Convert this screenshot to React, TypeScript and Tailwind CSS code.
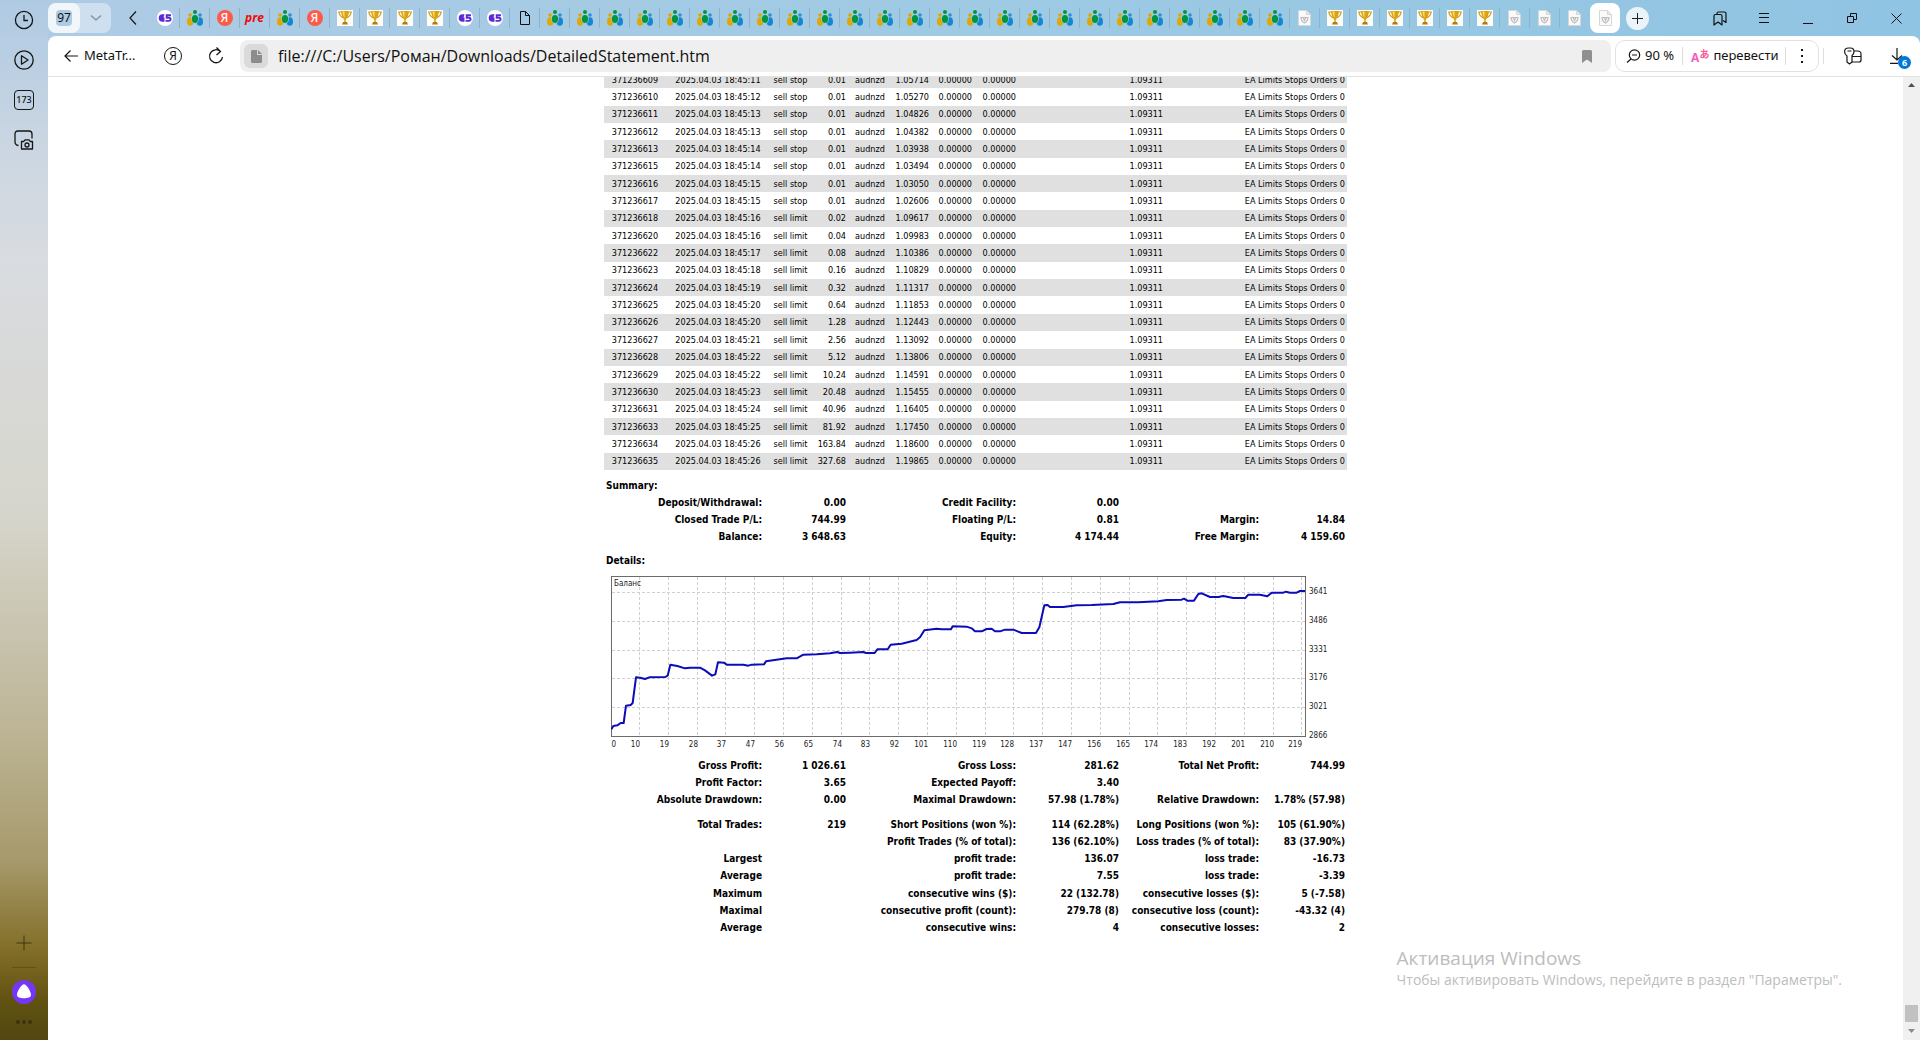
import React from 'react';

type TabKind = 'gs' | 'people' | 'yandex' | 'pre' | 'trophy' | 'file' | 'ghost';

const repeat = (kind: TabKind, count: number): TabKind[] => Array.from({ length: count }, () => kind);

const tabs: TabKind[] = [
  'gs',
  'people',
  'yandex',
  'pre',
  'people',
  'yandex',
  ...repeat('trophy', 4),
  ...repeat('gs', 2),
  'file',
  ...repeat('people', 25),
  'ghost',
  ...repeat('trophy', 6),
  ...repeat('ghost', 4),
];

// ticket, time, type, size, price
const orders = [
  ['371236609', '18:45:11', 'sell stop', '0.01', '1.05714'],
  ['371236610', '18:45:12', 'sell stop', '0.01', '1.05270'],
  ['371236611', '18:45:13', 'sell stop', '0.01', '1.04826'],
  ['371236612', '18:45:13', 'sell stop', '0.01', '1.04382'],
  ['371236613', '18:45:14', 'sell stop', '0.01', '1.03938'],
  ['371236615', '18:45:14', 'sell stop', '0.01', '1.03494'],
  ['371236616', '18:45:15', 'sell stop', '0.01', '1.03050'],
  ['371236617', '18:45:15', 'sell stop', '0.01', '1.02606'],
  ['371236618', '18:45:16', 'sell limit', '0.02', '1.09617'],
  ['371236620', '18:45:16', 'sell limit', '0.04', '1.09983'],
  ['371236622', '18:45:17', 'sell limit', '0.08', '1.10386'],
  ['371236623', '18:45:18', 'sell limit', '0.16', '1.10829'],
  ['371236624', '18:45:19', 'sell limit', '0.32', '1.11317'],
  ['371236625', '18:45:20', 'sell limit', '0.64', '1.11853'],
  ['371236626', '18:45:20', 'sell limit', '1.28', '1.12443'],
  ['371236627', '18:45:21', 'sell limit', '2.56', '1.13092'],
  ['371236628', '18:45:22', 'sell limit', '5.12', '1.13806'],
  ['371236629', '18:45:22', 'sell limit', '10.24', '1.14591'],
  ['371236630', '18:45:23', 'sell limit', '20.48', '1.15455'],
  ['371236631', '18:45:24', 'sell limit', '40.96', '1.16405'],
  ['371236633', '18:45:25', 'sell limit', '81.92', '1.17450'],
  ['371236634', '18:45:26', 'sell limit', '163.84', '1.18600'],
  ['371236635', '18:45:26', 'sell limit', '327.68', '1.19865'],
];

const summary = [
  ['Deposit/Withdrawal:', '0.00', 'Credit Facility:', '0.00', '', ''],
  ['Closed Trade P/L:', '744.99', 'Floating P/L:', '0.81', 'Margin:', '14.84'],
  ['Balance:', '3 648.63', 'Equity:', '4 174.44', 'Free Margin:', '4 159.60'],
];

const profit = [
  ['Gross Profit:', '1 026.61', 'Gross Loss:', '281.62', 'Total Net Profit:', '744.99'],
  ['Profit Factor:', '3.65', 'Expected Payoff:', '3.40', '', ''],
  ['Absolute Drawdown:', '0.00', 'Maximal Drawdown:', '57.98 (1.78%)', 'Relative Drawdown:', '1.78% (57.98)'],
];

const trades = [
  ['Total Trades:', '219', 'Short Positions (won %):', '114 (62.28%)', 'Long Positions (won %):', '105 (61.90%)'],
  ['', '', 'Profit Trades (% of total):', '136 (62.10%)', 'Loss trades (% of total):', '83 (37.90%)'],
  ['Largest', '', 'profit trade:', '136.07', 'loss trade:', '-16.73'],
  ['Average', '', 'profit trade:', '7.55', 'loss trade:', '-3.39'],
  ['Maximum', '', 'consecutive wins ($):', '22 (132.78)', 'consecutive losses ($):', '5 (-7.58)'],
  ['Maximal', '', 'consecutive profit (count):', '279.78 (8)', 'consecutive loss (count):', '-43.32 (4)'],
  ['Average', '', 'consecutive wins:', '4', 'consecutive losses:', '2'],
];

const xLabels = [0, 10, 19, 28, 37, 47, 56, 65, 74, 83, 92, 101, 110, 119, 128, 137, 147, 156, 165, 174, 183, 192, 201, 210, 219];
const yLabels = [3641, 3486, 3331, 3176, 3021, 2866];

const balance =
  '1,460 7,450 19,448 29,441 38,441 45,389 59,387 65,381 75,304 87,305 102,309 115,304 163,303 170,299 178,266 199,270 222,277 237,275 267,275 282,283 303,299 313,295 321,259 339,260 347,266 397,266 412,269 422,266 459,265 465,256 527,247 557,247 577,236 617,235 657,232 679,228 687,231 717,230 757,228 765,231 791,231 799,220 830,220 839,206 872,203 917,192 927,184 940,163 977,158 992,160 1020,160 1025,151 1067,152 1082,157 1092,166 1112,166 1127,159 1142,158 1152,166 1167,166 1182,161 1207,161 1232,171 1275,171 1285,154 1300,88 1310,87 1317,93 1357,93 1397,88 1442,87 1507,84 1527,79 1582,79 1642,76 1667,72 1712,71 1719,68 1729,74 1749,74 1762,54 1772,52 1797,63 1822,63 1837,60 1867,66 1903,66 1912,56 1947,56 1969,61 1982,50 2017,50 2025,47 2037,50 2057,50 2067,45 2082,45';

const Favicon: React.FC<{ kind: TabKind }> = ({ kind }) => {
  switch (kind) {
    case 'gs':
      return (
        <svg width="16" height="16" viewBox="0 0 16 16">
          <circle cx="8" cy="8" r="8" fill="#fff" />
          <path d="M7.500 4.200H5.500a3.800 3.800 0 0 0 0 7.600h2V7.500H4.500v1.800H6" fill="#5b2bd9" />
          <path d="M14 5.200H9.700v2.500H12a1.600 1.600 0 0 1 0 3.200H8.500" fill="none" stroke="#5b2bd9" strokeWidth="1.900" />
        </svg>
      );
    case 'people':
      return (
        <svg width="16" height="16" viewBox="0 0 16 16">
          <circle cx="3" cy="5" r="1.800" fill="#d9a70b" />
          <ellipse cx="3.200" cy="11.500" rx="3.200" ry="4.300" fill="#e0a800" />
          <circle cx="13" cy="5" r="1.800" fill="#2f8fd0" />
          <ellipse cx="12.800" cy="11.500" rx="3.200" ry="4.300" fill="#1387d2" />
          <ellipse cx="8" cy="9.200" rx="3.700" ry="4.400" fill="#a5c9e3" />
          <ellipse cx="8" cy="9" rx="3.100" ry="4" fill="#009640" />
          <circle cx="8" cy="2" r="2" fill="#009640" />
        </svg>
      );
    case 'yandex':
      return (
        <span className="flex size-4 items-center justify-center rounded-full bg-[#fc5b48] font-['Noto_Sans',sans-serif] text-xs font-medium text-white">Я</span>
      );
    case 'pre':
      return <span className="font-['Open_Sans',sans-serif] text-xs font-bold text-[#f00808] italic">pre</span>;
    case 'trophy':
      return (
        <svg width="16" height="16" viewBox="0 0 16 16">
          <path d="M0 0h16v16H0z" fill="#fffdf6" />
          <path d="M4.500 2H1.800Q2.300 6 6.500 8M11.500 2h2.700Q13.700 6 9.500 8" fill="none" stroke="#c99a1c" strokeWidth="1.200" />
          <path d="M4 1h8Q11.500 7 8.800 9.500v3H7.200v-3Q4.500 7 4 1z" fill="#d9a314" />
          <path d="M5.500 1.500h2v6.500Q5.800 5.500 5.500 1.500z" fill="#fbe06a" />
          <path d="M6 12h4l1 2.500H5z" fill="#b57a14" />
        </svg>
      );
    case 'file':
      return (
        <svg width="10" height="14" viewBox="0 0 10 14" fill="none" stroke="#111">
          <path d="M.5.5h5l4 4v9h-9zM5.500.5v4h4" />
        </svg>
      );
    default:
      return (
        <svg width="13" height="16" viewBox="0 0 13 16">
          <path d="M.5.5h8l4 4v11H.5z" fill="#fafafa" stroke="#d6d6d6" />
          <path d="M8.500.5v4h4" fill="#e5e5e5" stroke="#d6d6d6" />
          <path d="M3 7.500h7Q10 11 6.500 13 3 11 3 7.500zM5 7.500l1.500 3 1.500-3" fill="none" stroke="#bcbcbc" strokeWidth="1.200" />
        </svg>
      );
  }
};

const Sidebar = () => (
  <aside className="flex w-12 shrink-0 flex-col items-center">
    <button aria-label="History" className="flex h-10 w-12 items-center justify-center">
      <svg width="20" height="20" viewBox="0 0 20 20" fill="none" stroke="#161616" strokeWidth="1.300">
        <circle cx="10" cy="10" r="8.600" />
        <path d="M10 5v5.500h4" />
      </svg>
    </button>
    <button aria-label="Video" className="flex h-10 w-12 items-center justify-center">
      <svg width="20" height="20" viewBox="0 0 20 20" fill="none" stroke="#161616" strokeWidth="1.300" strokeLinejoin="round">
        <circle cx="10" cy="10" r="9.200" />
        <path d="M7.500 5.800v8.400l6.500-4.200z" />
      </svg>
    </button>
    <button aria-label="Tab count" className="flex h-10 w-12 items-center justify-center">
      <span className="flex size-5 items-center justify-center rounded border border-[#161616] text-[9px] font-medium">173</span>
    </button>
    <button aria-label="Screenshot" className="flex h-10 w-12 items-center justify-center">
      <svg width="20" height="20" viewBox="0 0 20 20" fill="none" stroke="#161616" strokeWidth="1.300">
        <path d="M4.500 15.500Q1 15 1 12V4Q1 1 4 1h11q3 0 3 3v4.500" />
        <path d="M7.500 11.500h2.300l1.200-1.700h4l1.200 1.700h2.300v7.500h-11z" strokeLinejoin="round" />
        <circle cx="13" cy="15" r="2" />
      </svg>
    </button>
    <div className="mt-auto flex flex-col items-center">
      <button aria-label="Add" className="flex h-8 items-center text-[#3c340c]">
        <svg width="16" height="16" viewBox="0 0 16 16" stroke="currentColor">
          <path d="M8 .5v15M.5 8h15" />
        </svg>
      </button>
      <div className="mt-2 h-px w-6 bg-[#5f5216]" />
      <button aria-label="Assistant" className="mt-3 size-6">
        <svg width="24" height="24" viewBox="0 0 24 24">
          <circle cx="12" cy="12" r="12" fill="#7437f7" />
          <path d="M12 4.300c2.600 0 7 7.200 7 10.400 0 2.600-3 3.500-7 3.500s-7-.9-7-3.500c0-3.200 4.400-10.400 7-10.400z" fill="#fff" />
        </svg>
      </button>
      <button aria-label="More" className="flex h-9 items-center gap-0.5">
        <span className="size-1 rounded-full bg-[#3a330c]" />
        <span className="size-1 rounded-full bg-[#3a330c]" />
        <span className="size-1 rounded-full bg-[#3a330c]" />
      </button>
    </div>
  </aside>
);

const TabStrip = () => (
  <header className="flex h-9 shrink-0 items-center">
    <div className="flex h-[30px] w-[63px] items-center rounded-lg bg-white/40">
      <button className="flex h-full w-8 items-center justify-center rounded-lg bg-white/70">
        <span className="flex size-4 items-center justify-center rounded bg-[#adcbe4] text-xs">97</span>
      </button>
      <button aria-label="Tab list" className="flex flex-1 justify-center">
        <svg width="12" height="6" viewBox="0 0 12 6" fill="none" stroke="#7b8da0" strokeWidth="1.300">
          <path d="M1 .5l5 4.500 5-4.500" />
        </svg>
      </button>
    </div>
    <button aria-label="Scroll tabs" className="flex w-[39px] justify-center pl-1">
      <svg width="8" height="14" viewBox="0 0 8 14" fill="none" stroke="#161616" strokeWidth="1.200">
        <path d="M7 .5L1 7l6 6.500" />
      </svg>
    </button>
    <nav className="flex items-center">
      {tabs.map((kind, i) => {
        const active = i === tabs.length - 1;
        const line = i < tabs.length - 2;
        return (
          <button key={i} aria-label={`Tab ${i + 1}`} className={active ? 'flex h-[30px] w-[30px] items-center justify-center rounded-lg bg-white' : 'flex h-[30px] w-[30px] items-center'}>
            {active ? (
              <Favicon kind={kind} />
            ) : (
              <>
                <span className="flex flex-1 justify-center">
                  <Favicon kind={kind} />
                </span>
                <span className={line ? 'h-5 w-px bg-[#8fb2cb]' : 'h-5 w-px'} />
              </>
            )}
          </button>
        );
      })}
    </nav>
    <button aria-label="New tab" className="ml-1.5 flex size-[23px] items-center justify-center rounded-full bg-white/80">
      <svg width="11" height="11" viewBox="0 0 11 11" stroke="#222">
        <path d="M5.500 0v11M0 5.500h11" />
      </svg>
    </button>
    <div className="ml-auto flex pr-0.5">
      <button aria-label="Bookmarks" className="flex w-11 justify-center">
        <svg width="14" height="15" viewBox="0 0 14 15" fill="none" stroke="#111" strokeWidth="1.200" strokeLinejoin="round">
          <path d="M1 5q0-1.500 1.500-1.500h5Q9 3.500 9 5v9l-4-3-4 3z" />
          <path d="M4 3.500V2.500Q4 1 5.500 1h6Q13 1 13 2.500v9l-3-2" />
        </svg>
      </button>
      <button aria-label="Menu" className="flex w-11 items-center justify-center">
        <svg width="10" height="10" viewBox="0 0 10 10" stroke="#111">
          <path d="M0 .5h10M0 4.500h10M0 9.500h10" />
        </svg>
      </button>
      <button aria-label="Minimize" className="flex w-11 items-end justify-center pb-0.5">
        <span className="h-px w-2.5 bg-[#111]" />
      </button>
      <button aria-label="Restore" className="flex w-11 items-center justify-center">
        <svg width="10" height="10" viewBox="0 0 10 10" fill="none" stroke="#111">
          <path d="M.5 3.500h6v6h-6zM3.500 3.500v-3h6v6h-3" />
        </svg>
      </button>
      <button aria-label="Close" className="flex w-11 items-center justify-center">
        <svg width="11" height="11" viewBox="0 0 11 11" stroke="#111">
          <path d="M.5.5l10 10M10.500.5l-10 10" />
        </svg>
      </button>
    </div>
  </header>
);

const Toolbar = () => (
  <div className="flex h-[41px] shrink-0 items-center border-b border-[#e2e2e2]">
    <a href="#back" className="ml-4 flex w-[76px] items-center gap-1.5 text-[13px]">
      <svg width="14" height="12" viewBox="0 0 14 12" fill="none" stroke="#161616" strokeWidth="1.200">
        <path d="M14 6H1M6.500.5L1 6l5.500 5.500" />
      </svg>
      MetaTr...
    </a>
    <button aria-label="Yandex" className="ml-6 flex size-[18px] items-center justify-center rounded-full border border-[#161616] text-xs">
      Я
    </button>
    <button aria-label="Reload" className="ml-[26px] flex w-4 justify-center">
      <svg width="16" height="18" viewBox="0 0 16 18" fill="none" stroke="#161616" strokeWidth="1.300">
        <path d="M12.500 4.500A6.500 6.500 0 1 0 14.500 10M8.500.5l4 4-4 3.500" />
      </svg>
    </button>
    <label className="ml-4 flex h-8 flex-1 items-center rounded-lg bg-[#efefef] pl-1">
      <span className="flex size-6 items-center justify-center rounded-md bg-[#dadada]">
        <svg width="11" height="13" viewBox="0 0 11 13" fill="#8c8c8c">
          <path d="M1.500 0H6v5h5v6.500q0 1.500-1.500 1.500h-8Q0 13 0 11.500v-10Q0 0 1.500 0zM7 0l4 4H7z" />
        </svg>
      </span>
      <input
        aria-label="Address"
        readOnly
        value="file:///C:/Users/Роман/Downloads/DetailedStatement.htm"
        className="ml-2.5 flex-1 bg-transparent font-['Open_Sans',sans-serif] text-base outline-none"
      />
      <svg className="mr-[19px]" width="10" height="13" viewBox="0 0 10 13" fill="#8f8f8f">
        <path d="M1.500 0h7Q10 0 10 1.500V13L5 9.500 0 13V1.500Q0 0 1.500 0z" />
      </svg>
    </label>
    <div className="ml-1 flex h-8 w-[204px] shrink-0 items-center rounded-[10px] border border-[#e2e2e2] pl-2.5">
      <button className="flex items-center gap-1 text-[13px] whitespace-nowrap">
        <svg width="15" height="14" viewBox="0 0 15 14" fill="none" stroke="#161616" strokeWidth="1.200">
          <circle cx="8.500" cy="6" r="5.200" />
          <path d="M5 10L1 13.500M6 6h5" />
        </svg>
        90 %
      </button>
      <span className="mx-2 h-[18px] w-px bg-[#dedede]" />
      <button className="flex items-center gap-1 text-[13px]">
        <span className="flex font-bold text-[#f25fc4]">
          <span className="self-end text-xs leading-3">A</span>
          <span className="pb-1 font-['Noto_Sans_CJK_JP',sans-serif] text-[10px] leading-3 text-[#fb5a9a]">あ</span>
        </span>
        перевести
      </button>
      <span className="ml-auto h-[18px] w-px bg-[#dedede]" />
      <button aria-label="More" className="flex w-8 flex-col items-center gap-0.5">
        <span className="size-0.5 bg-[#161616]" />
        <span className="my-0.5 size-0.5 bg-[#161616]" />
        <span className="size-0.5 bg-[#161616]" />
      </button>
    </div>
    <span className="ml-1 h-4 w-px bg-[#dedede]" />
    <button aria-label="Passwords" className="ml-5">
      <svg width="18" height="18" viewBox="0 0 18 18" fill="none" stroke="#161616" strokeWidth="1.200" strokeLinejoin="round">
        <path d="M3 9Q.6 7.500.6 4.500.6 1 4.500 1h2Q10 1 10 4.500 10 7 8 8.500V15l-2.500 2L3 15zM3.500 4h4" />
        <path d="M10 4h3.500Q17 4 17 7v6q0 2-2 2H8M8 9.500h9" />
      </svg>
    </button>
    <button aria-label="Downloads" className="relative mr-4 ml-7">
      <svg width="14" height="16" viewBox="0 0 14 16" fill="none" stroke="#161616" strokeWidth="1.200">
        <path d="M7 0v12M2 7.500L7 12l5-4.500M0 15.400h8" />
      </svg>
      <span className="absolute top-2 left-2 flex size-[13px] items-center justify-center rounded-full bg-[#0078d7] text-[9px] font-bold text-white">6</span>
    </button>
  </div>
);

const BalanceChart = () => (
  <svg className="block w-full" viewBox="0 0 743 188" fontSize="8" fill="#222">
    <g stroke="#d0d0d0" strokeDasharray="3 2">
      {xLabels.slice(1).map((x, i) => (
        <path key={x} d={`M${Math.round(36 + i * 28.8) - 0.5} 8V168`} />
      ))}
      {yLabels.slice(0, 5).map((y, i) => (
        <path key={y} d={`M8 ${Math.round(24 + i * 28.8) - 0.5}H701`} />
      ))}
    </g>
    <rect x="7.500" y="7.500" width="694" height="160" fill="none" stroke="#6b6b6b" />
    <svg x="7" y="7" width="694" height="161" viewBox="0 0 2082 483">
      <polyline points={balance} fill="none" stroke="#0c0cb8" strokeWidth="6" strokeLinejoin="round" />
    </svg>
    <text x="10" y="17">
      Баланс
    </text>
    {xLabels.map((x, i) => (
      <text key={x} x={i === 0 ? 12 : Math.round(36 + (i - 1) * 28.8)} y="178" textAnchor="end">
        {x}
      </text>
    ))}
    {yLabels.map((y, i) => (
      <text key={y} x="705" y={Math.round(25 + i * 28.8)}>
        {y}
      </text>
    ))}
  </svg>
);

const StatsTable: React.FC<{ rows: string[][]; className: string }> = ({ rows, className }) => (
  <table className={`w-full table-fixed text-right text-[10px] leading-3 font-bold ${className}`}>
    <colgroup>
      <col className="w-40" />
      <col className="w-[84px]" />
      <col className="w-[170px]" />
      <col className="w-[103px]" />
      <col className="w-[140px]" />
      <col />
    </colgroup>
    <tbody>
      {rows.map((row, i) => (
        <tr key={i}>
          {row.map((cell, j) => (
            <td key={j} className="p-0 pr-0.5 whitespace-nowrap">
              {cell}
            </td>
          ))}
        </tr>
      ))}
    </tbody>
  </table>
);

const OrdersTable = () => (
  <table className="h-[399px] w-full table-fixed text-right whitespace-nowrap">
    <colgroup>
      <col className="w-[62px]" />
      <col className="w-[104px]" />
      <col className="w-[41px]" />
      <col className="w-[37px]" />
      <col className="w-11" />
      <col className="w-[39px]" />
      <col className="w-[43px]" />
      <col className="w-11" />
      <col className="w-[147px]" />
      <col />
    </colgroup>
    <tbody>
      {orders.map(([ticket, time, type, size, price]) => (
        <tr key={ticket} className="odd:bg-[#e0e0e0]">
          <td className="p-0 text-center">{ticket}</td>
          <td className="p-0 text-center">2025.04.03 {time}</td>
          <td className="p-0 text-center">{type}</td>
          <td className="p-0 pr-0.5">{size}</td>
          <td className="p-0 text-center">audnzd</td>
          <td className="p-0 pr-0.5">{price}</td>
          <td className="p-0 pr-0.5">0.00000</td>
          <td className="p-0 pr-0.5">0.00000</td>
          <td className="p-0 pr-0.5">1.09311</td>
          <td className="p-0 pr-0.5">EA Limits Stops Orders 0</td>
        </tr>
      ))}
    </tbody>
  </table>
);

const App: React.FC = () => (
  <div className="flex h-screen overflow-hidden bg-[linear-gradient(180deg,#aecae3_0%,#c9d5e2_13%,#d9dce0_25%,#d6d5cc_50%,#bdb596_70%,#a6996a_83%,#84702a_91%,#625312_96%,#524711_100%)] font-['Noto_Sans',sans-serif] text-[#111]">
    <Sidebar />
    <div className="flex min-w-0 flex-1 flex-col bg-[linear-gradient(90deg,#aecbe4,#9ecae4_50%,#8fc4e2)]">
      <TabStrip />
      <div className="flex min-h-0 flex-1 flex-col rounded-t-lg bg-white">
        <Toolbar />
        <div className="relative flex min-h-0 flex-1">
          {/* Report is scrolled to the end, so it hangs from the bottom edge */}
          <main className="flex flex-1 flex-col items-center justify-end overflow-hidden pb-[103px]">
            <div className="w-[743px] font-['DejaVu_Sans_Condensed','DejaVu_Sans',sans-serif] text-[9px] leading-3 text-black">
              <OrdersTable />
              <h2 className="mt-[7px] pl-0.5 text-[10px] leading-[17px] font-bold">Summary:</h2>
              <StatsTable rows={summary} className="h-[52px]" />
              <h2 className="mt-1.5 pl-0.5 text-[10px] leading-[17px] font-bold">Details:</h2>
              <BalanceChart />
              <StatsTable rows={profit} className="h-[52px]" />
              <StatsTable rows={trades} className="mt-[7px] h-[121px]" />
            </div>
          </main>
          <div className="flex w-[17px] flex-col items-center bg-[#f0f0f0]">
            <svg className="mt-1.5" width="7" height="4" viewBox="0 0 7 4" fill="#505050">
              <path d="M0 4L3.500 0 7 4z" />
            </svg>
            <div className="mt-auto h-[17px] w-[13px] bg-[#c1c1c1]" />
            <svg className="my-[7px]" width="7" height="4" viewBox="0 0 7 4" fill="#8b8b8b">
              <path d="M0 0l3.500 4L7 0z" />
            </svg>
          </div>
          <div className="absolute right-[78px] bottom-[50px] font-['Open_Sans',sans-serif] text-[#bdbdbd]">
            <p className="text-[19px] leading-6">Активация Windows</p>
            <p className="text-sm">Чтобы активировать Windows, перейдите в раздел "Параметры".</p>
          </div>
        </div>
      </div>
    </div>
  </div>
);

export default App;
